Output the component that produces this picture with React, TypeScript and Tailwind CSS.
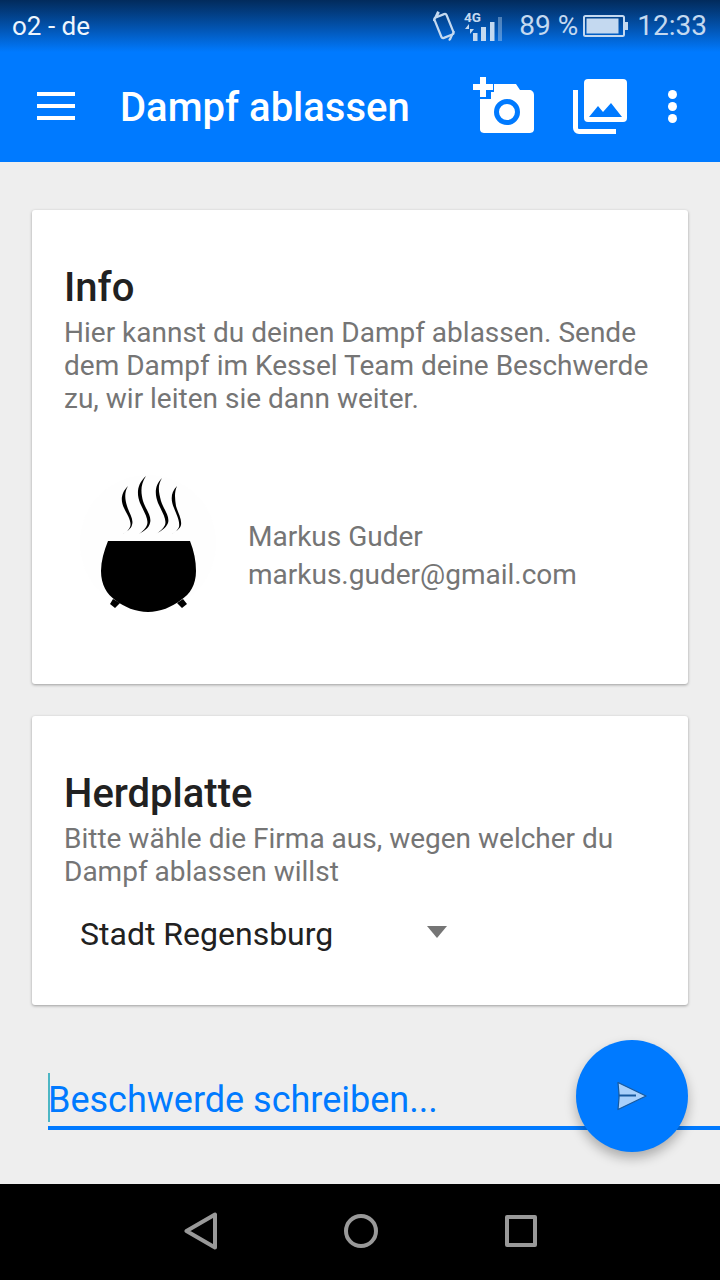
import React from 'react';

const steam = [
  'M58 21 C50 29 51 37 54 43 C58 51 62 57 60 62 C59 65 56 67 53 69 C57 66 61 64 62 60 C64 54 59 48 57 41 C55 34 54 28 58 21 Z',
  'M76 11 C66 20 67 30 70 38 C74 47 79 54 77 60 C76 63 73 66 69 69 C74 66 79 63 80 58 C82 51 76 45 73 36 C71 28 70 20 76 11 Z',
  'M92 13 C84 21 85 30 88 38 C92 47 97 54 95 60 C93 64 90 66 86 69 C91 66 96 63 98 58 C100 51 94 45 91 36 C89 28 87 21 92 13 Z',
  'M107 21 C100 28 101 36 104 43 C107 51 110 56 109 62 C108 65 105 67 102 69 C106 66 110 64 111 60 C112 54 108 48 106 41 C105 34 104 28 107 21 Z',
];

const Kettle = () => (
  <svg width="160" height="160" viewBox="0 0 160 160" className="shrink-0">
    <circle cx="78" cy="78" r="68" fill="#fefefe" />
    {steam.map((d) => (
      <path key={d} d={d} fill="#000" />
    ))}
    <path d="M38 76 L120 76 C124 86 126 96 126 106 C126 120 120 129 111 135 C102 142 90 147 78 147 C66 147 54 142 45 135 C37 129 31 120 31 106 C31 96 34 86 38 76 Z" fill="#000" />
    <path d="M43 134 L40 139 L45 143 L50 138 Z M113 134 L117 139 L112 143 L107 138 Z" fill="#000" />
  </svg>
);

const StatusIcons = () => (
  <svg width="72" height="32" viewBox="0 0 72 32" className="shrink-0">
    <g fill="none" stroke="#c4d9f0" strokeWidth="2.2">
      <rect x="4.5" y="5" width="13" height="22" rx="2" transform="rotate(-22 11 16)" />
      <path d="M0.5 11 L5 1.5 M3.5 7 L6 2 M21 21 L17 30 M18.5 26 L16 30.5" strokeWidth="1.8" />
    </g>
    <text x="31" y="12" fontSize="13.5" fontWeight="700" fill="#c4d9f0" fontFamily="Roboto">4G</text>
    <path d="M36 14 L32 19 L36 19 Z M37 19 L41 19 L37 24 Z" fill="#c4d9f0" />
    <rect x="40" y="23" width="4.5" height="8" fill="#c4d9f0" />
    <rect x="48" y="17" width="5" height="14" fill="#c4d9f0" />
    <rect x="57" y="12" width="4.5" height="19" fill="#c4d9f0" />
    <rect x="65" y="7" width="4" height="24" fill="#c4d9f0" opacity="0.4" />
  </svg>
);

const Battery = () => (
  <svg width="46" height="22" viewBox="0 0 46 22" className="shrink-0">
    <rect x="1" y="1" width="40" height="20" rx="1.5" fill="none" stroke="#c4d9f0" strokeWidth="2" />
    <rect x="3.5" y="3.5" width="32" height="15" fill="#c4d9f0" />
    <rect x="42" y="7" width="3" height="8" fill="#c4d9f0" />
  </svg>
);

const AddPhoto = () => (
  <svg width="62" height="58" viewBox="0 0 62 58" className="shrink-0">
    <path d="M8 0 H14 V7 H21 V13 H14 V20 H8 V13 H1 V7 H8 Z" fill="#fff" />
    <path d="M22 15 L22 7 H44 L48 13 H57 C60 13 62 15 62 18 V52 C62 55 60 56 57 56 H13 C10 56 8 55 8 52 V22 H19 V15 Z" fill="#fff" />
    <circle cx="35" cy="35" r="10.5" fill="none" stroke="#007aff" strokeWidth="5" />
  </svg>
);

const Gallery = () => (
  <svg width="55" height="55" viewBox="0 0 55 55" className="shrink-0">
    <rect x="11" y="0" width="43" height="43" rx="4" fill="#fff" />
    <path d="M16 38 L25 27 L30 33 L38 24 L49 38 Z" fill="#007aff" />
    <path d="M2.5 11 V49 C2.5 51 4 52.5 6 52.5 H43" fill="none" stroke="#fff" strokeWidth="5" />
  </svg>
);

const SendIcon = () => (
  <svg width="32" height="30" viewBox="0 0 32 30">
    <path d="M2 1.5 L30 15 L2 28.5 L3 17 L3 13 Z" fill="#a8d0fb" stroke="#17599e" strokeWidth="1.2" strokeLinejoin="round" />
    <path d="M3 14.5 H20" stroke="#17599e" strokeWidth="2" />
  </svg>
);

const App: React.FC = () => {
  return (
    <div className="flex h-[1280px] w-[720px] flex-col overflow-hidden bg-[#eeeeee] font-['Roboto',sans-serif]">
      <div className="h-[162px] shrink-0 bg-[#007aff]">
        {/* status bar */}
        <div className="flex h-[52px] items-center bg-gradient-to-b from-[#022b5c] to-[#007aff] pl-3 pr-[13px] text-[28px] text-[#c4d9f0]">
          <span className="text-[26px] text-[#eef5fd]">o2 - de</span>
          <div className="ml-auto mr-[14px] flex items-center">
            <StatusIcons />
          </div>
          <span className="mr-[5px]">89 %</span>
          <Battery />
          <span className="ml-[8px]">12:33</span>
        </div>
        {/* toolbar */}
        <div className="flex h-[110px] items-center pb-[2px] pl-[37px] pr-[43px]">
          <div className="flex w-[38px] flex-col gap-2">
            <div className="h-1 bg-white" />
            <div className="h-1 bg-white" />
            <div className="h-1 bg-white" />
          </div>
          <h1 className="ml-[45px] mt-[4px] text-[40px] font-medium text-white">Dampf ablassen</h1>
          <div className="ml-auto flex items-center">
            <AddPhoto />
            <div className="ml-[39px]">
              <Gallery />
            </div>
            <div className="ml-[40px] flex flex-col gap-[3px]">
              <div className="size-[9px] rounded-full bg-white" />
              <div className="size-[9px] rounded-full bg-white" />
              <div className="size-[9px] rounded-full bg-white" />
            </div>
          </div>
        </div>
      </div>

      <div className="flex flex-1 flex-col px-8 pt-12">
        <div className="h-[474px] rounded-[3px] bg-white px-8 pt-[50px] shadow-[0_1px_3px_rgba(0,0,0,0.35)]">
          <h2 className="text-[40px] leading-[56px] font-medium text-[#212121]">Info</h2>
          <p className="text-[28px] leading-[33px] text-[#757575]">
            Hier kannst du deinen Dampf ablassen. Sende dem Dampf im Kessel Team deine Beschwerde zu, wir leiten sie dann weiter.
          </p>
          <div className="mt-[50px] flex items-center">
            <div className="ml-[6px]">
              <Kettle />
            </div>
            <div className="ml-[18px] mt-[22px] text-[28px] leading-[38px] text-[#757575]">
              <div>Markus Guder</div>
              <div>markus.guder@gmail.com</div>
            </div>
          </div>
        </div>

        <div className="mt-8 h-[289px] rounded-[3px] bg-white px-8 pt-[50px] shadow-[0_1px_3px_rgba(0,0,0,0.35)]">
          <h2 className="text-[40px] leading-[56px] font-medium text-[#212121]">Herdplatte</h2>
          <p className="text-[28px] leading-[33px] text-[#757575]">
            Bitte wähle die Firma aus, wegen welcher du Dampf ablassen willst
          </p>
          <div className="mt-[26px] flex w-[383px] items-center justify-between pl-4">
            <span className="text-[32px] leading-[40px] text-[#212121]">Stadt Regensburg</span>
            <svg width="20" height="12" viewBox="0 0 20 12" className="-mt-1">
              <path d="M0 0 H20 L10 12 Z" fill="#757575" />
            </svg>
          </div>
        </div>

        {/* input row */}
        <div className="relative -mr-8 ml-4 mt-[69px] h-[56px] border-b-[4px] border-[#007aff]">
          <div className="absolute left-0 top-[-1px] h-[49px] w-[2px] bg-[#4db6c4]" />
          <span className="absolute left-0 top-[3px] text-[36px] leading-[46px] text-[#007aff]">Beschwerde schreiben...</span>
          <button className="absolute left-[528px] top-[-34px] flex size-[112px] items-center justify-center rounded-full bg-[#007aff] shadow-[0_6px_12px_rgba(0,0,0,0.28)]">
            <SendIcon />
          </button>
        </div>
      </div>

      {/* nav bar */}
      <div className="flex h-[96px] shrink-0 items-center bg-black pb-[3px] pl-[184px]">
        <svg width="34" height="38" viewBox="0 0 34 38">
          <path d="M31 2.5 V35.5 L2.5 19 Z" fill="none" stroke="#999" strokeWidth="4" strokeLinejoin="round" />
        </svg>
        <div className="ml-[126px] size-[34px] rounded-full border-4 border-[#999]" />
        <div className="ml-[127px] size-[32px] rounded-[2px] border-4 border-[#999]" />
      </div>
    </div>
  );
};

export default App;
